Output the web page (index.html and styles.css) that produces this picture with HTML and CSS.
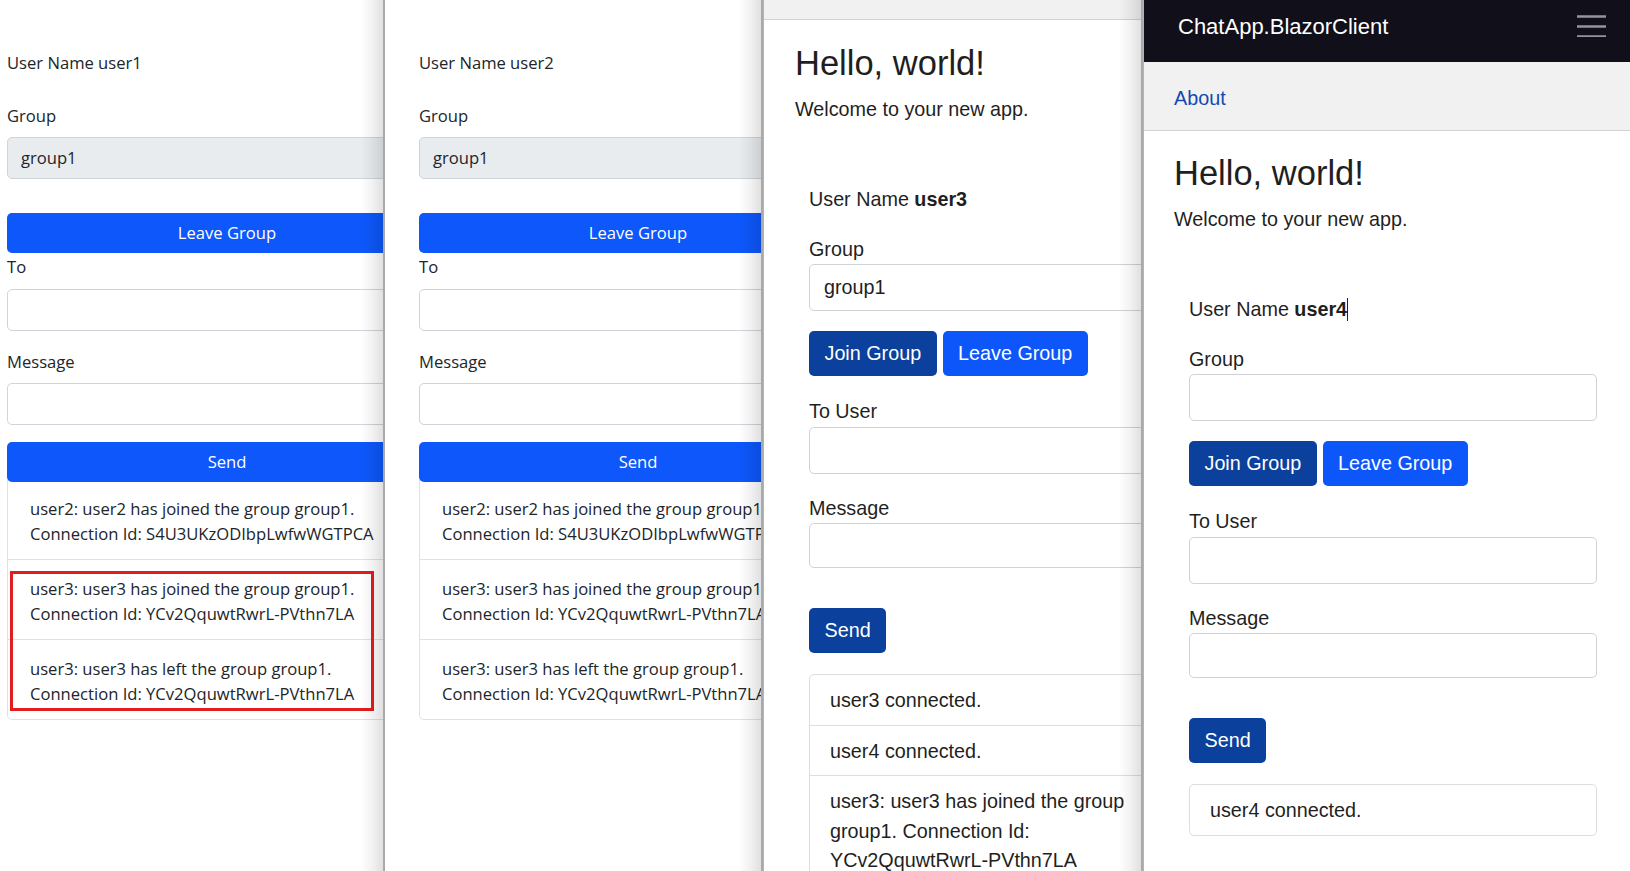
FILE: index.html
```html
<!DOCTYPE html>
<html lang="en">
<head>
<meta charset="utf-8">
<title>ChatApp</title>
<link rel="stylesheet" href="styles.css">
</head>
<body>
<div class="screen">

  <section class="win win1 shade">
    <div class="legacy">
      <p class="uname">User Name user1</p>
      <label class="lbl">Group</label>
      <div class="field disabled">group1</div>
      <button class="wbtn leave">Leave Group</button>
      <label class="lbl lbl-to">To</label>
      <div class="field to"></div>
      <label class="lbl">Message</label>
      <div class="field msg"></div>
      <button class="wbtn send">Send</button>
      <ul class="msgs">
        <li>user2: user2 has joined the group group1.<br>Connection Id: S4U3UKzODIbpLwfwWGTPCA</li>
        <li>user3: user3 has joined the group group1.<br>Connection Id: YCv2QquwtRwrL-PVthn7LA</li>
        <li>user3: user3 has left the group group1.<br>Connection Id: YCv2QquwtRwrL-PVthn7LA</li>
        <div class="highlight"></div>
      </ul>
    </div>
  </section>

  <section class="win win2 shade">
    <div class="legacy">
      <p class="uname">User Name user2</p>
      <label class="lbl">Group</label>
      <div class="field disabled">group1</div>
      <button class="wbtn leave">Leave Group</button>
      <label class="lbl lbl-to">To</label>
      <div class="field to"></div>
      <label class="lbl">Message</label>
      <div class="field msg"></div>
      <button class="wbtn send">Send</button>
      <ul class="msgs">
        <li>user2: user2 has joined the group group1.<br>Connection Id: S4U3UKzODIbpLwfwWGTPCA</li>
        <li>user3: user3 has joined the group group1.<br>Connection Id: YCv2QquwtRwrL-PVthn7LA</li>
        <li>user3: user3 has left the group group1.<br>Connection Id: YCv2QquwtRwrL-PVthn7LA</li>
      </ul>
    </div>
  </section>

  <section class="win win3 shade modern">
    <div class="navstub"></div>
    <main class="content">
      <h1 class="hello">Hello, world!</h1>
      <p class="welcome">Welcome to your new app.</p>
      <div class="chat">
        <p class="uname">User Name <b>user3</b></p>
        <div class="group">
          <label>Group</label>
          <div class="inp">group1</div>
        </div>
        <div class="btnrow">
          <button class="btn dark">Join Group</button>
          <button class="btn bright">Leave Group</button>
        </div>
        <div class="group">
          <label>To User</label>
          <div class="inp"></div>
        </div>
        <div class="group last">
          <label>Message</label>
          <div class="inp msgbox"></div>
        </div>
        <div class="sendrow"><button class="btn dark">Send</button></div>
        <ul class="log">
          <li>user3 connected.</li>
          <li>user4 connected.</li>
          <li>user3: user3 has joined the group group1. Connection Id: YCv2QquwtRwrL-PVthn7LA</li>
        </ul>
      </div>
    </main>
  </section>

  <section class="win win4 modern">
    <header class="topbar">
      <span class="brand">ChatApp.BlazorClient</span>
      <svg class="burger" width="30" height="24" viewBox="0 0 30 24" aria-hidden="true">
        <path d="M0 3.5H29M0 13.5H29M0 23.5H29" stroke="#96949b" stroke-width="2.5" fill="none"/>
      </svg>
    </header>
    <nav class="navlinks"><a href="#">About</a></nav>
    <main class="content">
      <h1 class="hello">Hello, world!</h1>
      <p class="welcome">Welcome to your new app.</p>
      <div class="chat">
        <p class="uname">User Name <b>user4</b><span class="caret"></span></p>
        <div class="group">
          <label>Group</label>
          <div class="inp"></div>
        </div>
        <div class="btnrow">
          <button class="btn dark">Join Group</button>
          <button class="btn bright">Leave Group</button>
        </div>
        <div class="group">
          <label>To User</label>
          <div class="inp"></div>
        </div>
        <div class="group last">
          <label>Message</label>
          <div class="inp msgbox"></div>
        </div>
        <div class="sendrow"><button class="btn dark">Send</button></div>
        <ul class="log">
          <li>user4 connected.</li>
        </ul>
      </div>
    </main>
  </section>

</div>
</body>
</html>
```
FILE: styles.css
```css
* { box-sizing: border-box; }
html, body { margin: 0; padding: 0; }
body { width: 1630px; height: 871px; overflow: hidden; background: #fff; color: #212529; }

.screen { display: flex; height: 871px; }

.win { position: relative; overflow: hidden; flex: none; height: 100%; background: #fff; }
.win1 { width: 385px; }
.win2 { width: 378px; }
.win3 { width: 380px; border-left: 1px solid #b4b4b4; }
.win4 { width: 487px; border-left: 1px solid #b4b4b4; }

.shade::after {
  content: "";
  position: absolute;
  top: 0; right: 0; bottom: 0;
  width: 22px;
  background: linear-gradient(to right, rgba(0,0,0,0), rgba(0,0,0,0.05) 50%, rgba(0,0,0,0.12));
  border-right: 2px solid #a9a9a9;
  pointer-events: none;
  z-index: 5;
}

/* ---------- legacy client (panels 1 & 2) ---------- */
.legacy {
  font-family: "Open Sans", "Noto Sans", sans-serif;
  font-size: 16.6px;
  line-height: 25px;
  padding-top: 50px;
  width: 440px;
  margin-left: 7px;
}
.win2 .legacy { margin-left: 34px; width: 438px; }

.legacy .uname { margin: 0 0 28px; }
.legacy .lbl { display: block; margin-bottom: 9px; }
.legacy .lbl-to { margin-bottom: 10px; }

.legacy .field {
  height: 42px;
  border: 1px solid #ced4da;
  border-radius: 5px;
  padding: 0 13px;
  line-height: 40px;
  background: #fff;
}
.legacy .field.disabled { background: #e9ecef; margin-bottom: 34px; }
.legacy .field.to { margin-bottom: 18px; }
.legacy .field.msg { margin-bottom: 17px; }

.legacy .wbtn {
  display: block;
  width: 100%;
  height: 40px;
  border: 0;
  border-radius: 5px;
  background: #0d57fb;
  color: #fff;
  font: inherit;
  line-height: 40px;
  padding: 0;
  text-align: center;
}
.legacy .wbtn.leave { margin-bottom: 1px; }

.msgs {
  position: relative;
  list-style: none;
  margin: -2px 0 0;
  padding: 0;
  border: 1px solid #dfe2e5;
  border-top: 0;
  border-radius: 0 0 5px 5px;
  white-space: nowrap;
}
.msgs li {
  padding: 16px 22px 13px;
  border-top: 1px solid #dfe2e5;
}
.msgs li:first-child { border-top: 0; }

.highlight {
  position: absolute;
  left: 2px;
  top: 91px;
  width: 364px;
  height: 140px;
  border: 3px solid #e11d1d;
  pointer-events: none;
}

/* ---------- blazor client (panels 3 & 4) ---------- */
.modern {
  font-family: "Liberation Sans", Arial, sans-serif;
  font-size: 19.75px;
  line-height: 29.5px;
  color: #1f1f22;
}

.topbar {
  height: 62px;
  background: #110f1a;
  display: flex;
  align-items: flex-start;
  justify-content: space-between;
  padding: 0 23px 0 34px;
}
.brand { color: #fff; font-size: 22px; line-height: 26px; margin-top: 14px; }
.burger { display: block; margin-top: 13px; }

.navlinks {
  height: 69px;
  background: #f1f1f1;
  border-bottom: 1px solid #d2d2d2;
  padding: 5px 0 0 30px;
  display: flex;
  align-items: center;
}
.navlinks a { color: #1249b3; text-decoration: none; }

.navstub {
  height: 20px;
  background: #f1f1f1;
  border-bottom: 1px solid #d2d2d2;
}

.content { padding: 22px 18px 0 30px; }
.win3 .content { padding-left: 31px; padding-top: 23px; }

.hello {
  font-size: 34.5px;
  line-height: 41.4px;
  font-weight: 400;
  margin: 0 0 10.6px;
}
.welcome { margin: 0 0 60.5px; }

.chat { padding: 0 15px; }
.win3 .chat { width: 354px; padding: 0 0 0 14px; }

.chat .uname { margin: 0 0 20px; }
.chat label { display: block; }
.group { margin-bottom: 20px; }
.group.last { margin-bottom: 0; }

.inp {
  height: 47px;
  border: 1px solid #cfd2d6;
  border-radius: 5px;
  padding: 0 14px;
  line-height: 45px;
  background: #fff;
}
.inp.msgbox { height: 45px; }

.btnrow { display: flex; gap: 6px; margin-bottom: 21px; }
.btn {
  height: 45px;
  padding: 0 15.5px;
  border: 0;
  border-radius: 5px;
  color: #fff;
  font: inherit;
  line-height: 45px;
}
.btn.dark { background: #0b409c; }
.btn.bright { background: #0d57fa; }

.sendrow { margin-top: 40px; margin-bottom: 21px; }

.log {
  list-style: none;
  margin: 0;
  padding: 0;
  border: 1px solid #dedede;
  border-radius: 5px;
}
.log li { padding: 11px 20px 9px; border-top: 1px solid #dedede; }
.log li:first-child { border-top: 0; }

.caret {
  display: inline-block;
  width: 1px;
  height: 23px;
  background: #222;
  vertical-align: -5px;
}
```
